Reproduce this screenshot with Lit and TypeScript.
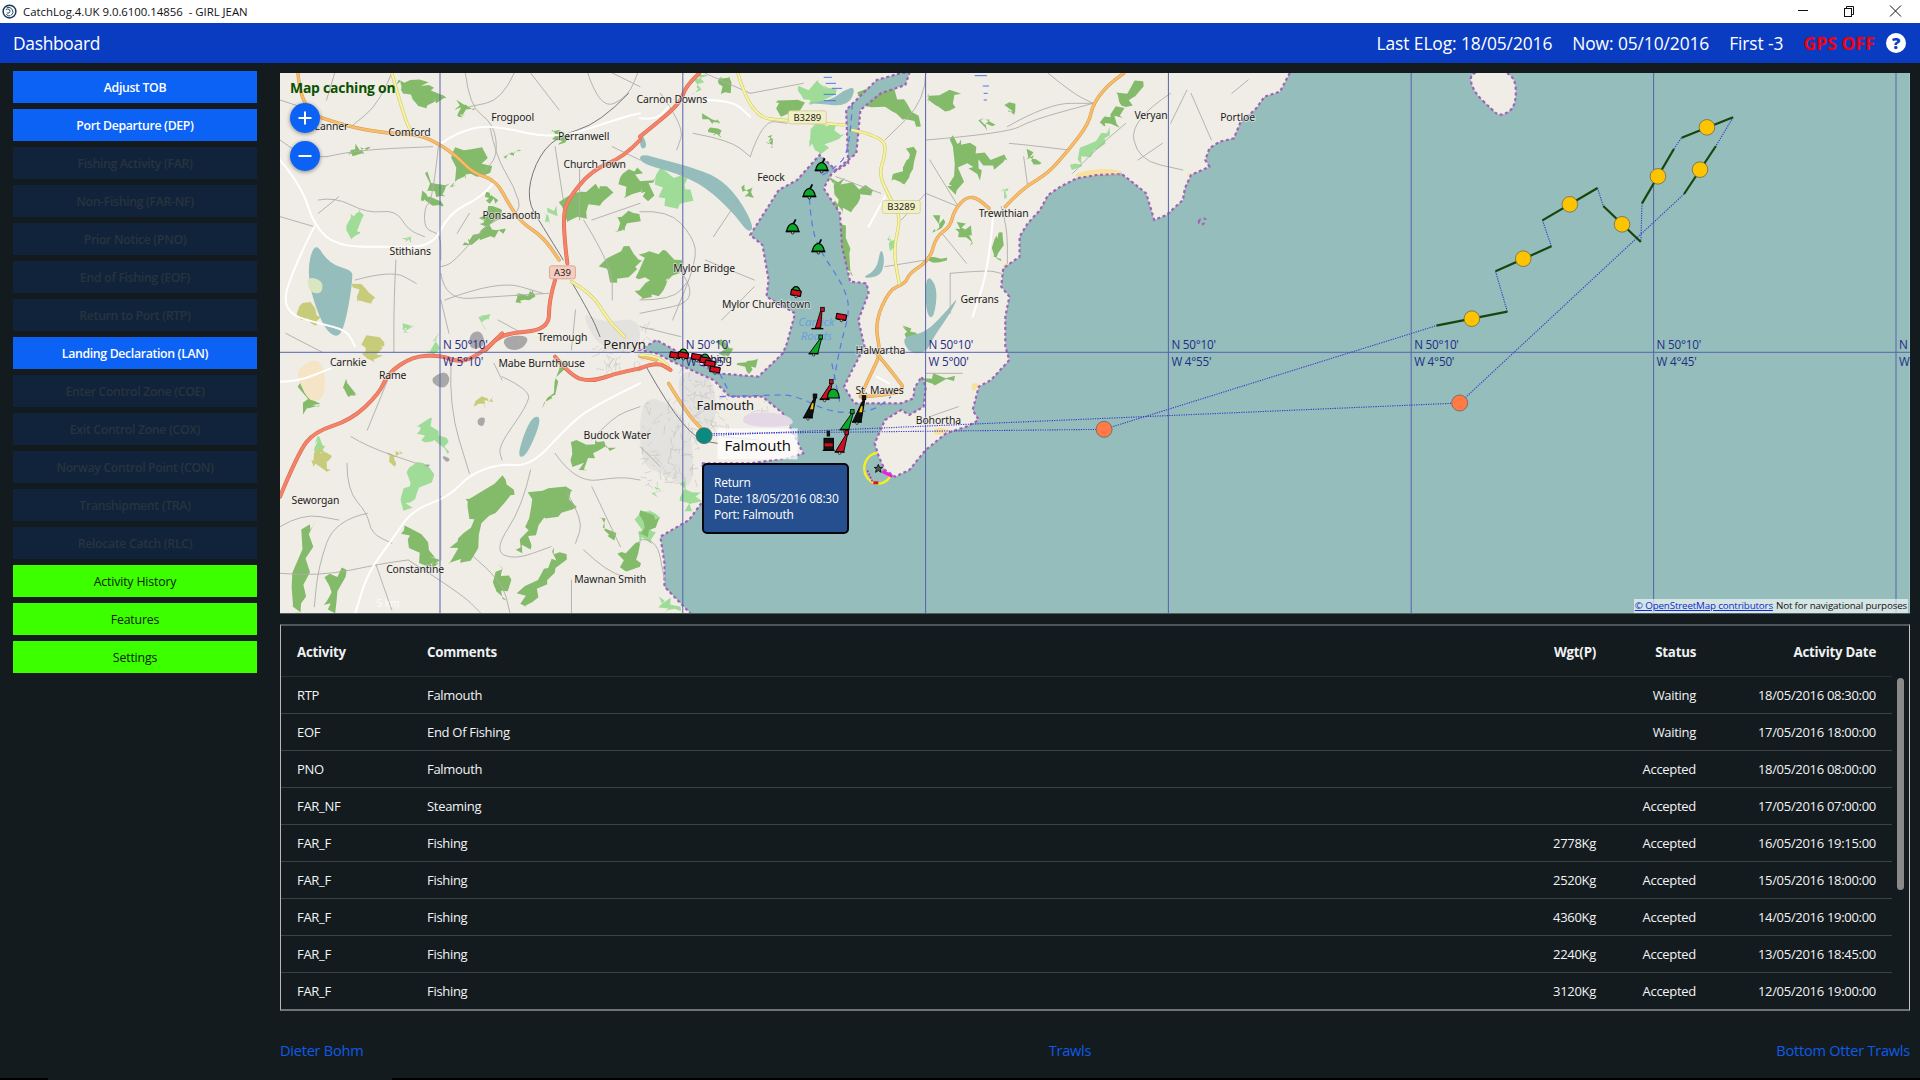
import { LitElement, html, css, svg } from "lit";
import { customElement } from "lit/decorators.js";

type Zone = "A" | "B" | "C" | "D" | "E";
const ORIGIN: Record<Zone, [number, number]> = { A: [0, 0], B: [0, 340], C: [640, 60], D: [640, 280], E: [1280, 0] };
const SX = 1 / 2.45;
const SY = 1 / 3;
const sx = (z: Zone, x: number) => ORIGIN[z][0] + x * SX;
const sy = (z: Zone, y: number) => ORIGIN[z][1] + y * SY;
const fx = (x: number) => 660 + x / 3;
const fy = (y: number) => 330 + y / 3;
const gx = (x: number) => 770 + x / 3;
const gy = (y: number) => 140 + y / 3;

function hash(s: string): number {
  let h = 2166136261;
  for (let i = 0; i < s.length; i++) h = Math.imul(h ^ s.charCodeAt(i), 16777619);
  return h >>> 0;
}
function rng(seed: number) {
  let a = seed;
  return () => {
    a = (a + 0x6d2b79f5) | 0;
    let t = Math.imul(a ^ (a >>> 15), 1 | a);
    t = (t + Math.imul(t ^ (t >>> 7), 61 | t)) ^ t;
    return ((t ^ (t >>> 14)) >>> 0) / 4294967296;
  };
}

function sm(pts: string, closed = false): string {
  const p = pts.trim().split(/\s+/).map((s) => s.split(",").map(Number));
  if (p.length < 3) return "M" + p.map((q) => q.join(" ")).join("L");
  const mid = (a: number[], b: number[]) => `${(a[0] + b[0]) / 2} ${(a[1] + b[1]) / 2}`;
  if (closed) {
    let d = `M${mid(p[p.length - 1], p[0])}`;
    p.forEach((q, i) => (d += `Q${q[0]} ${q[1]} ${mid(q, p[(i + 1) % p.length])}`));
    return d + "Z";
  }
  let d = `M${p[0].join(" ")}`;
  for (let i = 1; i < p.length - 1; i++) d += `Q${p[i][0]} ${p[i][1]} ${mid(p[i], p[i + 1])}`;
  return d + `L${p[p.length - 1].join(" ")}`;
}

function rough(pts: string, amp = 14, sub = 4): string {
  const r = rng(hash(pts));
  const p = pts.trim().split(/\s+/).map((s) => s.split(",").map(Number));
  const out: string[] = [];
  p.forEach((q, i) => {
    const n = p[(i + 1) % p.length];
    for (let k = 0; k < sub; k++) {
      const t = k / sub;
      const j = k === 0 ? 0.3 : 1;
      const x = q[0] + (n[0] - q[0]) * t + (r() - 0.5) * 2 * amp * j;
      const y = q[1] + (n[1] - q[1]) * t + (r() - 0.5) * 2 * amp * j;
      out.push(`${x.toFixed(1)},${y.toFixed(1)}`);
    }
  });
  return "M" + out.map((s) => s.replace(",", " ")).join("L") + "Z";
}

const AREAS: Partial<Record<Zone, Record<string, string[]>>> = {
  A: {
    forest: [
      "970,250 1030,235 1060,260 1090,290 1050,315 1010,300 985,270",
      "1120,300 1160,330 1140,345 1120,340",
      "1040,520 1100,550 1090,590 1040,570",
      "1110,460 1180,440 1200,520 1150,520 1120,540 1105,560",
      "1040,580 1080,600 1060,620 1035,600",
      "1190,570 1225,600 1200,610",
      "1150,720 1195,670 1240,690 1200,710 1130,740",
      "1170,650 1210,620 1230,650 1190,680",
      "1380,600 1460,550 1500,580 1440,640 1390,670",
      "1510,650 1568,640 1530,690 1510,700",
      "1470,800 1530,740 1568,780 1568,810 1510,850",
      "1270,880 1310,870 1300,900 1265,910",
      "860,450 900,440 895,460 865,465",
      "1235,470 1270,450 1260,465",
      "1355,390 1390,400 1370,430",
      "1520,530 1560,500 1568,570 1530,590",
    ],
    light: ["860,640 880,630 880,700 860,710", "1330,640 1360,620 1350,680", "1040,1050 1080,1000 1075,1057", "985,710 1010,705 1005,720", "990,980 1005,980 1000,1000", "1180,950 1200,940 1190,990"],
    water: ["770,720 805,790 860,810 865,830 850,950 830,1020 790,980 750,830"],
    marsh: ["860,850 920,890 880,910", "740,910 790,950 770,980 730,950", "900,1010 940,1040 895,1060"],
    pale: ["750,830 790,840 790,880 760,880"],
    town: ["1420,930 1480,970 1568,950 1568,1060 1470,1050"],
    grey: ["1150,1000 1180,990 1190,1040 1150,1050", "1230,1010 1300,1005 1280,1050 1240,1050"],
  },
  B: {
    forest: [
      "740,130 760,180 785,200 745,220", "845,120 870,165 855,170",
      "1140,480 1230,410 1260,460 1200,530 1150,660 1100,670 1120,600 1160,540",
      "1290,460 1400,450 1400,510 1330,530 1300,620 1265,630 1290,560",
      "990,560 1050,630 1070,670 1050,680 1000,600",
      "740,570 770,550 760,700 735,820 720,800", "810,700 850,690 820,820 800,780",
      "1220,670 1245,710 1235,780 1215,740", "1270,760 1340,680 1360,620 1385,660 1340,730 1290,800",
      "1400,310 1460,300 1510,320 1450,340 1440,390 1400,360",
      "1330,210 1370,90 1390,60 1360,160", "1470,530 1505,600 1480,570",
      "1525,640 1568,600 1568,670 1530,690",
    ],
    light: ["1020,260 1060,230 1095,290 1100,340 1060,300 1020,280", "1020,370 1060,410 1020,480 990,510 1000,440", "780,295 790,330 775,320"],
    marsh: ["1180,170 1205,180 1195,205 1165,200", "785,325 800,340 805,385 770,380", "955,340 978,335 970,370 950,365", "895,0 930,0 935,50 900,60"],
    farm: ["730,80 790,50 800,170 760,190 730,120"],
    grey: ["1050,120 1090,90 1105,120 1085,150", "1170,235 1190,230 1185,260 1170,255", "1080,345 1105,355 1095,370", "1035,375 1055,372 1050,382"],
    water: ["1300,230 1330,230 1290,350 1265,350"],
  },
  C: {
    forest: [
      "0,580 60,570 100,620 60,670 0,660", "0,690 80,640 60,690 0,720", "330,130 400,130 350,170",
      "460,350 520,370 570,400 530,430 500,460 480,400", "530,100 620,60 650,120 690,200 640,180 570,140",
      "700,110 790,100 760,150 700,120", "760,240 790,240 820,280 900,300 870,330 830,300 830,360 800,310 770,400 755,370",
      "620,350 650,300 670,260 660,340 640,370", "1140,170 1185,145 1170,190 1140,200", "1170,100 1230,60 1210,110 1180,140",
      "780,490 815,500 810,560 780,530", "870,530 885,530 885,600 870,590", "640,800 700,840 660,870",
      "480,420 500,530 525,650 505,620 480,500", "150,160 200,190 180,190", "190,60 220,50 210,100",
      "310,230 325,260 315,255", "250,380 275,410 255,410", "170,210 195,225 175,230", "905,130 920,165 905,150",
      "945,270 985,310 960,305", "830,180 870,195 850,205", "720,470 750,490 720,510",
      "700,590 750,590 710,610", "0,380 40,340 20,420",
    ],
    light: ["45,330 120,350 130,420 70,440 45,400", "390,80 440,70 480,90 450,130 400,120", "430,190 480,190 490,240 440,280 415,260", "1060,330 1100,250 1150,200 1120,270 1080,310", "130,100 160,45 140,85", "610,530 625,535 615,570", "890,385 905,385 900,415"],
    sand: ["1065,340 1120,325 1180,330 1180,342 1120,345 1068,355", "890,610 910,610 905,625 890,625", "1335,345 1360,338 1350,350"],
  },
  D: {
    town: ["90,270 180,280 190,440 140,440 100,380", "0,340 90,380 130,470 130,640 60,580 0,560"],
    light: ["100,590 150,640 130,690 100,650", "0,700 40,700 30,780 0,790", "50,950 100,980 60,1000", "40,620 60,640 40,650"],
    forest: ["690,290 770,290 720,310", "0,700 45,710 20,770 0,760", "640,140 690,190 660,190", "200,180 220,230 195,220", "235,250 290,240 270,280"],
    sand: ["810,310 835,310 815,340", "720,440 770,450 720,470"],
  },
};

const RIVERS: [Zone, string][] = [
  ["C", "0,280 60,300 120,320 190,350 240,410 280,500 265,520 230,460 160,380 90,340 0,310"],
  ["C", "590,560 600,600 590,650 540,655 580,630"],
  ["C", "640,830 700,820 760,740 780,710 760,760 720,830 700,880 660,880"],
  ["C", "400,130 470,120 500,90 530,80 510,140 430,130"],
  ["C", "700,640 730,680 720,780 700,760"],
  ["C", "0,210 0,270 20,260"],
];

const SEA = "1592,39 1568,95 1530,110 1510,145 1470,190 1455,235 1420,245 1395,265 1385,300 1395,320 1350,345 1335,385 1330,420 1290,465 1260,480 1250,440 1240,400 1210,370 1180,342 1120,345 1070,355 1030,380 1000,405 980,450 950,490 930,530 930,590 890,625 885,680 905,710 895,770 895,860 905,900 860,960 830,980 815,1050 830,1080 800,1100 750,1120 700,1170 660,1230 625,1250 600,1230 585,1190 575,1150 600,1080 640,1050 660,1065 695,1040 700,980 690,950 672,985 670,1015 640,1030 560,1030 525,1030 500,980 520,930 550,860 535,780 560,700 555,670 515,665 495,560 490,460 450,385 470,340 510,310 505,150 580,60 640,39 660,39 650,75 590,100 540,150 530,280 480,330 440,285 385,360 340,390 270,525 300,555 315,660 310,710 380,760 360,850 350,880 290,950 190,940 100,880 40,840 0,870 40,880 80,905 180,960 220,1010 300,1010 350,1060 400,1180 360,1195 270,1210 150,1210 180,1280 120,1380 50,1430 60,1510 60,1580 125,1662";
const ISLAND = "465,210 470,270 520,330 540,350 580,320 575,210";

const ROADS: Partial<Record<Zone, Record<string, string[]>>> = {
  A: {
    minor: [
      "1140,219 1150,320 1210,370 1220,470 1180,520", "1075,430 1060,600 1040,620 1040,690 1080,700 1080,780",
      "780,600 820,590 900,640 970,630 1000,690 1040,710", "686,650 770,680", "800,470 870,450 1060,440",
      "960,219 930,310 860,380", "970,780 965,900 965,1057", "1080,820 1090,900 1210,890 1345,880", "1080,900 1100,1000",
      "1200,380 1215,470 1260,560 1280,640 1200,660 1110,790 1080,800", "1360,440 1380,600", "1430,660 1500,800 1500,900",
      "1440,219 1470,330 1540,290 1568,200", "1500,219 1568,260", "686,420 740,470 800,470", "830,590 780,640",
      "1150,640 1120,700", "1090,900 1220,840 1330,880", "1420,500 1420,660", "686,300 760,330", "820,219 800,300",
      "1260,219 1230,300 1150,320", "1300,219 1370,330", "870,840 960,810 1020,850", "700,1000 790,1057", "1220,960 1280,1000",
      "1500,440 1568,480", "1450,660 1568,610", "1410,930 1400,1050",
    ],
    white: [
      "686,480 740,560 770,680 830,740 960,740 1060,740 1100,640 1180,590 1215,540",
      "1080,430 1130,390 1210,375 1360,420 1530,350 1568,340",
      "770,680 700,850 700,940 780,970 850,990 870,1040",
    ],
    rail: ["1540,280 1470,370 1360,410 1310,490 1290,600 1330,680 1380,780", "1400,845 1450,950 1470,1010"],
    orange: ["780,350 850,380 950,400 1030,405 1080,435 1120,470 1160,520 1215,540 1250,620 1280,670 1330,710 1370,780", "730,219 735,290 770,345"],
    red: ["1568,420 1530,470 1450,510 1390,600 1380,650 1385,740 1390,790", "1360,840 1345,900 1345,990 1230,1000 1190,1050"],
    yellow: ["960,219 990,350 1005,390", "1400,845 1450,880 1490,960 1530,1010"],
  },
  B: {
    minor: [
      "850,370 850,450 900,520 910,580 960,610", "860,290 900,320 1020,370", "1105,70 1100,200 1150,400",
      "1230,110 1300,150 1290,200 1220,320 1230,360", "900,520 820,540 780,680 770,800", "686,700 780,710 940,670 1000,660",
      "1300,390 1280,500 1210,630 1260,660 1350,620", "1360,340 1410,430 1520,410 1568,420", "1430,630 1490,700 1568,720",
      "1080,470 1080,660", "1000,660 1130,760 1180,822", "960,810 920,670", "1450,300 1500,230 1568,200",
      "686,560 740,520 830,540", "1160,650 1230,720 1250,822", "1400,720 1400,822", "1450,440 1520,620", "950,120 900,270",
      "1230,120 1210,70", "1390,460 1430,540 1410,610",
    ],
    white: ["686,125 730,125 810,85", "1568,130 1450,200 1390,260 1300,380 1225,370 1150,405 1100,470 1010,510 960,600 900,700 870,822"],
    red: ["686,470 730,340 770,275 860,240 930,160 950,100 1010,50 1080,45 1130,70 1190,30 1230,-20", "1360,50 1400,110 1450,125 1510,100 1568,85"],
  },
  C: {
    minor: [
      "270,100 400,70", "900,200 1000,130 1110,130", "700,240 900,220 960,180 1110,130", "700,400 780,440", "710,300 730,340 780,440",
      "1190,190 1140,240 1060,340", "905,250 950,255 1050,270", "1300,100 1200,180 1220,300 1330,330", "1350,100 1400,240", "1100,360 1180,340",
      "940,290 950,380", "0,455 70,450 130,530 140,600 80,780", "160,600 280,660", "180,530 240,420", "270,290 300,180 360,190",
      "90,620 160,720 0,760", "760,640 850,630 885,640", "600,620 700,600", "480,350 590,400", "160,40 270,100", "1000,40 1060,100 1110,130",
      "1300,190 1340,90", "700,40 700,120 600,240", "885,440 900,500 900,610", "50,100 110,200 90,270", "130,220 220,240 270,290",
      "640,480 700,400", "1450,100 1490,60", "1220,300 1280,250", "740,520 800,610", "760,640 760,760",
    ],
    white: ["160,120 225,120 270,170", "600,410 560,500", "865,470 855,620 815,770", "0,175 40,180 70,140"],
    orange: ["1185,40 1150,70 1110,130 1100,190 1050,270 1000,340 950,375 910,420 895,440", "855,445 830,415 800,410 770,450 760,500 725,530 710,600 660,640 650,670 610,690 575,790 590,880 570,930 540,1010", "540,1010 660,1005 620,940 580,880"],
    red: ["145,40 110,80 100,130 0,230"],
    yellow: ["240,40 270,170 365,183 500,195", "520,210 600,230 600,290 585,340 610,410 640,470 620,570 635,670"],
  },
  D: {
    minor: ["200,470 290,480", "0,500 50,560", "0,780 40,770 60,900", "700,280 790,280", "0,140 100,170", "0,60 80,60 120,0", "200,120 280,20", "710,410 780,380"],
    rail: ["15,260 70,380 140,480 190,490"],
    orange: ["70,310 115,400 150,445", "0,228 40,240"],
    red: ["0,265 40,245 75,270"],
    yellow: ["0,225 40,225 70,260"],
    white: ["580,290 610,310"],
  },
};

const CHANNELS: [Zone, string][] = [
  ["C", "415,415 420,500 440,570 500,680 515,750 490,860 475,960"],
  ["C", "520,130 515,280 470,330 440,350"],
  ["D", "195,350 320,345 380,345 470,400 570,395 615,350"],
  ["D", "470,250 490,370"],
  ["D", "195,280 220,340"],
];
const WATER_TICKS = ["450,52 470,52", "455,70 480,70", "470,85 495,85", "450,103 480,103", "450,122 480,122", "820,47 850,47", "840,78 855,78", "842,100 852,100", "842,120 850,120"];

const TOWN_HATCH: [number, number, number, number, number][] = [
  [682, 360, 46, 72, 70], [640, 395, 60, 90, 90], [590, 345, 50, 25, 30], [645, 320, 8, 20, 6], [760, 400, 30, 12, 12],
];

const GRID_X = [440, 682.8, 925.6, 1168.4, 1411.2, 1653.6, 1896];
const GRID_W = ["W 5°10'", "W 5°05'", "W 5°00'", "W 4°55'", "W 4°50'", "W 4°45'", "W"];
const GRID_Y = 352.3;

const LABELS: [Zone, number, number, string][] = [
  ["A", 1256, 353, "Frogpool"], ["A", 1430, 410, "Perranwell"], ["A", 1003, 396, "Comford"], ["A", 812, 380, "Lanner"],
  ["A", 1457, 494, "Church Town"], ["A", 1253, 645, "Ponsanooth"], ["A", 1005, 753, "Stithians"], ["A", 1378, 1012, "Tremough"],
  ["B", 853, 68, "Carnkie"], ["B", 962, 105, "Rame"], ["B", 1327, 71, "Mabe Burnthouse"], ["B", 1512, 287, "Budock Water"],
  ["B", 773, 482, "Seworgan"], ["B", 1017, 687, "Constantine"], ["B", 1495, 718, "Mawnan Smith"],
  ["C", 78, 118, "Carnon Downs"], ["C", 321, 352, "Feock"], ["C", 157, 626, "Mylor Bridge"], ["C", 309, 732, "Mylor Churchtown"],
  ["C", 1252, 166, "Veryan"], ["C", 1464, 172, "Portloe"], ["C", 891, 459, "Trewithian"], ["C", 832, 718, "Gerrans"], ["C", 589, 870, "Halwartha"],
  ["D", 175, 237, "Flushing"], ["D", 587, 330, "St. Mawes"], ["D", 731, 421, "Bohortha"],
];

const TRACK_GREEN = [
  "383,977 557,935", "528,814 665,739", "643,661 778,564", "792,618 884,726", "887,610 965,447", "984,413 1110,352", "1068,438 990,582",
];
const TRACK_DOT = [
  "557,935 528,814", "665,739 643,661", "778,564 792,618", "887,610 884,726", "965,447 984,413", "1110,352 1068,438", "990,582 440,1209",
];
const YELLOWS = [[470, 956], [596, 776], [710, 613], [838, 673], [926, 529], [1046, 382], [1029, 509]];

const BELLS_G: [number, number][] = [[155, 82], [118, 160], [68, 265], [145, 325]];
const SPARS_F: [number, number, number, number, string][] = [
  [462, 70, 482, 18, "g"], [495, 207, 514, 152, "r"], [445, 262, 465, 195, "y"], [555, 298, 577, 242, "g"], [592, 275, 612, 200, "y"], [540, 365, 560, 305, "r"],
];
const CLUSTER_F: [number, number][] = [[45, 75], [70, 75], [110, 80], [135, 90], [150, 100], [165, 118]];

const BUTTONS: [string, string][] = [
  ["Adjust TOB", "on"], ["Port Departure (DEP)", "on"], ["Fishing Activity (FAR)", "off"], ["Non-Fishing (FAR-NF)", "off"],
  ["Prior Notice (PNO)", "off"], ["End of Fishing (EOF)", "off"], ["Return to Port (RTP)", "off"], ["Landing Declaration (LAN)", "on"],
  ["Enter Control Zone (COE)", "off"], ["Exit Control Zone (COX)", "off"], ["Norway Control Point (CON)", "off"], ["Transhipment (TRA)", "off"],
  ["Relocate Catch (RLC)", "off"], ["Activity History", "go"], ["Features", "go"], ["Settings", "go"],
];

const ROWS = [
  ["RTP", "Falmouth", "", "Waiting", "18/05/2016 08:30:00"],
  ["EOF", "End Of Fishing", "", "Waiting", "17/05/2016 18:00:00"],
  ["PNO", "Falmouth", "", "Accepted", "18/05/2016 08:00:00"],
  ["FAR_NF", "Steaming", "", "Accepted", "17/05/2016 07:00:00"],
  ["FAR_F", "Fishing", "2778Kg", "Accepted", "16/05/2016 19:15:00"],
  ["FAR_F", "Fishing", "2520Kg", "Accepted", "15/05/2016 18:00:00"],
  ["FAR_F", "Fishing", "4360Kg", "Accepted", "14/05/2016 19:00:00"],
  ["FAR_F", "Fishing", "2240Kg", "Accepted", "13/05/2016 18:45:00"],
  ["FAR_F", "Fishing", "3120Kg", "Accepted", "12/05/2016 19:00:00"],
];

const zoneG = (z: Zone, content: unknown) =>
  svg`<g transform="translate(${ORIGIN[z][0]} ${ORIGIN[z][1]}) scale(${SX} ${SY})">${content}</g>`;

@customElement("app-root")
export class AppRoot extends LitElement {
  static styles = css`
    :host { display: flex; flex-direction: column; width: 1920px; height: 1080px; overflow: hidden; background: #141b1f; font-family: "Open Sans", "Noto Sans", sans-serif; color: #fff; }
    .titlebar { height: 23px; flex: none; background: #fff; color: #111; display: flex; align-items: center; font-size: 11.4px; letter-spacing: -0.02px; padding-left: 2px; }
    .titlebar .ico { width: 15px; height: 15px; margin-right: 6px; flex: none; }
    .titlebar .name { white-space: pre; }
    .winbtns { margin-left: auto; margin-right: 2px; display: flex; }
    .winbtns svg { width: 46px; height: 23px; display: block; }
    .header { height: 40px; flex: none; background: #0a3cc2; display: flex; align-items: center; padding: 0 14px 0 13px; font-size: 17.4px; line-height: 26px; letter-spacing: -0.1px; }
    .header .title { letter-spacing: -0.3px; }
    .header .stats { margin-left: auto; display: flex; flex: none; align-items: center; gap: 20px; white-space: nowrap; }
    .header .stats span { flex: none; }
    .gps { color: #f5000a; font-weight: 700; letter-spacing: 0.15px; }
    .help { width: 20px; height: 20px; display: block; flex: none; margin-left: -9px; }
    .help text { font-family: "Open Sans", sans-serif; font-weight: 800; font-size: 16.5px; fill: #0a3cc2; text-anchor: middle; }
    .body { flex: 1; display: flex; min-height: 0; }
    .side { width: 244px; flex: none; margin-left: 13px; padding-top: 8px; display: flex; flex-direction: column; gap: 6px; }
    .btn { height: 32px; display: flex; align-items: center; justify-content: center; font-size: 12.3px; font-weight: 600; letter-spacing: -0.34px; white-space: nowrap; }
    .btn.on { background: #0c62f5; color: #fff; }
    .btn.off { background: #11233a; color: #27343f; }
    .btn.go { background: #3cff00; color: #0b1a05; font-weight: 400; letter-spacing: -0.15px; }
    .main { flex: 1; margin-left: 23px; margin-right: 10px; padding-top: 10px; display: flex; flex-direction: column; min-width: 0; }
    .map { position: relative; height: 541px; flex: none; overflow: hidden; background: #f0ede7; border-bottom: 1px solid #555f60; box-sizing: border-box; }
    .map svg.canvas { display: block; width: 1630px; height: 541px; }
    .p { vector-effect: non-scaling-stroke; }
    .forest { fill: #84bb6a; }
    .light { fill: #9fdc98; }
    .water { fill: #94bdbc; }
    .marsh { fill: #c7cb7a; }
    .pale { fill: #d9e6c0; }
    .lilac { fill: #e4d8e6; }
    .farm { fill: #f6e4c6; }
    .grey { fill: #a8a8a8; }
    .town { fill: #e4e2df; }
    .sand { fill: #f8e2a0; }
    .hatch { stroke: #c5c3bf; stroke-width: 0.6; }
    .coast { fill: none; stroke: #a262b6; stroke-width: 2.2; stroke-dasharray: 3 2.6; }
    .r { fill: none; stroke-linejoin: round; stroke-linecap: round; }
    .minor { stroke: #aeada8; stroke-width: 0.9; }
    .white { stroke: #fff; stroke-width: 2; }
    .rail { stroke: #77777a; stroke-width: 1; }
    .orange-c { stroke: #d69a50; stroke-width: 3.4; }
    .orange { stroke: #f8bd68; stroke-width: 2.4; }
    .red-c { stroke: #de6c50; stroke-width: 4; }
    .red { stroke: #f3836a; stroke-width: 2.8; }
    .yellow-c { stroke: #c9c66e; stroke-width: 3.2; }
    .yellow { stroke: #f6f39c; stroke-width: 2.2; }
    .channel { fill: none; stroke: #5a78e8; stroke-width: 1.2; stroke-dasharray: 6 5; }
    .tick { fill: none; stroke: #4a78e8; stroke-width: 1; }
    .grid { stroke: #5663ad; stroke-width: 1; }
    .gridlab { font-family: "Open Sans", sans-serif; font-size: 11.7px; fill: #1f2c86; letter-spacing: -0.2px; }
    .place { font-family: "Noto Sans", sans-serif; font-size: 10.4px; fill: #1c1c1c; text-anchor: middle; paint-order: stroke; stroke: rgba(240,237,231,0.75); stroke-width: 1.5px; letter-spacing: -0.1px; }
    .town-big { font-size: 13px; }
    .bay { font-family: "Noto Sans", sans-serif; font-size: 11.5px; font-style: italic; fill: #6d9fdb; text-anchor: middle; }
    .shield-t { font-family: "Noto Sans", sans-serif; font-size: 9.5px; fill: #222; text-anchor: middle; }
    .dot { fill: none; stroke: #3636c8; stroke-width: 1.1; stroke-dasharray: 1.2 1.2; }
    .tg { stroke: #17450c; stroke-width: 2.2; fill: none; }
    .fal { font-family: "Open Sans", sans-serif; font-size: 15px; fill: #0c0c0c; }
    .caching { position: absolute; left: 10px; top: 5px; font-size: 13.9px; font-weight: 700; color: #0a5200; letter-spacing: -0.2px; }
    .zoom { position: absolute; left: 10px; width: 30px; height: 30px; border-radius: 50%; background: #0c62f5; box-shadow: 0 1px 4px rgba(0,0,0,0.45); }
    .zoom svg { display: block; width: 30px; height: 30px; }
    .zoom.plus { top: 30px; }
    .zoom.minus { top: 68px; }
    .tip { position: absolute; left: 422px; top: 390px; width: 147px; height: 71px; box-sizing: border-box; background: #264f8f; border: 2px solid #05070c; border-radius: 5px; padding: 10px 10px; font-size: 12px; line-height: 16px; letter-spacing: -0.25px; color: #fff; white-space: nowrap; }
    .attr { position: absolute; right: 2px; bottom: 0; height: 14px; background: rgba(255,255,255,0.6); font-size: 9.8px; line-height: 14px; padding: 0 1px; color: #111; letter-spacing: -0.16px; white-space: nowrap; }
    .attr span { color: #0b2bcc; text-decoration: underline; margin-right: 3px; }
    .table { height: 387px; flex: none; margin-top: 10px; box-sizing: border-box; border-top: 2px solid #4e565c; border-bottom: 2px solid #6d7377; border-left: 1px solid #b4b8ba; border-right: 1px solid #c4c8ca; display: flex; font-size: 13px; letter-spacing: -0.3px; }
    .cols { flex: 1; min-width: 0; }
    .row { display: grid; grid-template-columns: 130px 1fr 100px 100px 180px; padding: 0 16px; align-items: center; height: 37px; box-sizing: border-box; border-top: 1px solid #3c4145; color: #f2f4f5; }
    .row.head { height: 50px; padding-top: 2px; border-top: none; font-weight: 700; font-size: 13.3px; letter-spacing: -0.25px; color: #eef1f2; }
    .row.head + .row { border-top-color: #2a3034; }
    .r-al { text-align: right; }
    .track { width: 17px; flex: none; }
    .thumb { width: 7px; height: 212px; margin: 52px 0 0 5px; border-radius: 4px; background: #8a8a8a; }
    .foot { display: flex; justify-content: space-between; padding-top: 28px; font-size: 14.6px; line-height: 22px; color: #0d5be8; letter-spacing: -0.25px; }
    .strip { height: 2px; flex: none; background: #000; display: flex; }
    .strip i { display: block; width: 344px; margin-left: 48px; background: #141b1f; }
  `;

  private areas() {
    return (Object.keys(AREAS) as Zone[]).map((z) =>
      zoneG(z, Object.entries(AREAS[z]!).map(([cls, list]) =>
        list.map((pts) => {
          const jag = cls === "forest" || cls === "light" || cls === "marsh";
          return svg`<path class=${cls} d=${jag ? rough(pts) : sm(pts, true)}></path>`;
        }))));
  }

  private hatch() {
    const r = rng(42);
    const out: unknown[] = [];
    TOWN_HATCH.forEach(([x, y, w, h, n]) => {
      for (let i = 0; i < n; i++) {
        const a = x + r() * w, b = y + r() * h, t = r() * Math.PI, l = 3 + r() * 7;
        out.push(svg`<line class="hatch" x1=${a} y1=${b} x2=${a + Math.cos(t) * l} y2=${b + Math.sin(t) * l}></line>`);
      }
    });
    return out;
  }

  private sea() {
    const d = "M" + SEA.split(" ").map((q) => q.replace(",", " ")).join("L");
    return svg`${zoneG("C", svg`
      <path class="water" d="${d}L3111 1662L3111 39Z"></path>
      <path class="coast p" d=${d}></path>`)}
      ${RIVERS.map(([z, p]) => zoneG(z, svg`<path class="water" d=${sm(p, true)}></path>`))}`;
  }

  private roads() {
    const order = ["minor", "rail", "white", "orange", "yellow", "red"];
    return order.map((cls) =>
      (Object.keys(ROADS) as Zone[]).map((z) => {
        const list = ROADS[z]![cls];
        if (!list) return null;
        const cased = cls === "orange" || cls === "yellow" || cls === "red";
        return zoneG(z, list.map((pts) => svg`
          ${cased ? svg`<path class="r p ${cls}-c" d=${sm(pts)}></path>` : null}
          <path class="r p ${cls}" d=${sm(pts)}></path>`));
      }));
  }

  private shield(z: Zone, x: number, y: number, t: string, fill: string, stroke: string, w: number) {
    const X = sx(z, x), Y = sy(z, y);
    return svg`<rect x=${X - w / 2} y=${Y - 6.5} width=${w} height="13" rx="2" fill=${fill} stroke=${stroke} stroke-width="0.8"></rect>
      <text class="shield-t" x=${X} y=${Y + 3.4}>${t}</text>`;
  }

  private buoys() {
    const bell = (x: number, y: number) => svg`<g transform="translate(${gx(x)} ${gy(y)})">
      <path d="M1 -5 L3 -9" stroke="#000" stroke-width="1.8"></path>
      <path d="M-6 3 Q-5 -4 0 -5 Q5 -4 6 3Z" fill="#0ca828" stroke="#000" stroke-width="1.2"></path>
      <path d="M-7 3.2 L7 3.2" stroke="#000" stroke-width="1.6"></path>
      <circle cx="0" cy="4.4" r="1.3" fill="#9aa" stroke="#000" stroke-width="0.7"></circle></g>`;
    const can = (x: number, y: number, green = false) => svg`<g transform="translate(${x} ${y})">
      ${green ? svg`<path d="M-4.5 -1 Q-3 -6 0 -6 Q3 -6 4.5 -1Z" fill="#0ca828" stroke="#000" stroke-width="1.1"></path>` : null}
      <rect x="-5" y="-2.5" width="10" height="5.5" rx="0.6" fill="#d40c1c" stroke="#000" stroke-width="1.1" transform="rotate(10)"></rect>
      <circle cx="0" cy="3.8" r="1.2" fill="#bbb" stroke="#000" stroke-width="0.7"></circle></g>`;
    const spar = (bx: number, by: number, tx: number, ty: number, k: string) => {
      const B = [fx(bx), fy(by)], T = [fx(tx), fy(ty)];
      const c = k === "g" ? "#0ca828" : k === "r" ? "#cc1020" : "#111";
      const mid = [(B[0] + T[0]) / 2, (B[1] + T[1]) / 2];
      return svg`
        <path d="M${B[0] - 4.6} ${B[1]} L${T[0] - 0.8} ${T[1] + 3} L${T[0] + 0.8} ${T[1] + 3} L${B[0] + 3.8} ${B[1]}Z" fill=${c} stroke="#000" stroke-width="0.9"></path>
        ${k === "y" ? svg`<path d="M${mid[0] - 1.6} ${mid[1] + 3} L${mid[0] + 0.4} ${mid[1] - 3} L${mid[0] + 2} ${mid[1] - 3} L${mid[0] + 1.4} ${mid[1] + 3}Z" fill="#f0c814"></path>` : null}
        <rect x=${T[0] - 1.8} y=${T[1] - 1} width="3.6" height="4" fill=${k === "y" ? "#111" : c} stroke="#000" stroke-width="0.8"></rect>
        <path d="M${B[0] - 5.4} ${B[1] + 0.4} L${B[0] + 4.6} ${B[1] + 0.4}" stroke="#000" stroke-width="1.4"></path>
        <circle cx=${B[0] - 0.4} cy=${B[1] + 1.6} r="1.2" fill="#bbb" stroke="#000" stroke-width="0.6"></circle>`;
    };
    return svg`
      ${BELLS_G.map(([x, y]) => bell(x, y))}
      ${can(gx(78), gy(458), true)}
      ${can(gx(214), gy(530))}
      ${SPARS_F.map(([a, b, c, d, k]) => spar(a, b, c, d, k))}
      <path d="M${gx(136)} ${gy(564)} L${gx(152)} ${gy(512)} L${gx(156)} ${gy(512)} L${gx(152)} ${gy(564)}Z" fill="#cc1020" stroke="#000" stroke-width="0.9"></path>
      <rect x=${gx(152)} y=${gy(502)} width="3.6" height="4" fill="#cc1020" stroke="#000" stroke-width="0.8"></rect>
      <path d="M${gx(124)} ${gy(566)} L${gx(160)} ${gy(566)}" stroke="#000" stroke-width="1.4"></path>
      <g transform="translate(${fx(520)} ${fy(192)})"><path d="M-6 4 Q-5 -5 0 -5 Q5 -5 6 4Z" fill="#0ca828" stroke="#000" stroke-width="1.1"></path></g>
      <rect x=${fx(492)} y=${fy(325)} width="9.4" height="11.6" fill="#141414" stroke="#000"></rect>
      <rect x=${fx(494)} y=${fy(340)} width="8" height="3" fill="#d40c1c"></rect>
      <rect x=${fx(500)} y=${fy(302)} width="3.4" height="5.8" fill="#141414"></rect>
      <path d="M${fx(488)} ${fy(361)} L${fx(524)} ${fy(361)}" stroke="#000" stroke-width="1.2"></path>
      ${CLUSTER_F.map(([x, y], i) => can(fx(x), fy(y), i === 1 || i === 3))}`;
  }

  private tracks() {
    const o1 = [sx("D", 1137), sy("D", 448)];
    const o2 = [1459.7, 403];
    const teal = [sx("D", 157), sy("D", 467)];
    const ye = (p: string) => p.split(" ").map((q) => {
      const [a, b] = q.split(",").map(Number);
      return `${sx("E", a)},${sy("E", b)}`;
    }).join(" ");
    return svg`
      <polyline class="dot" points="${teal[0]},${teal[1] - 2} ${o1[0]},${o1[1]}"></polyline>
      <polyline class="dot" points="${teal[0]},${teal[1]} ${o2[0]},${o2[1]}"></polyline>
      <polyline class="dot" points="${o1[0]},${o1[1]} ${ye("383,977")}"></polyline>
      ${TRACK_DOT.map((p) => svg`<polyline class="dot" points=${ye(p)}></polyline>`)}
      ${TRACK_GREEN.map((p) => svg`<polyline class="tg" points=${ye(p)}></polyline>`)}
      ${YELLOWS.map(([x, y]) => svg`<circle cx=${sx("E", x)} cy=${sy("E", y)} r="7.8" fill="#ffc400" stroke="#6a6a50" stroke-width="0.8"></circle>`)}
      <circle cx=${o1[0]} cy=${o1[1]} r="8" fill="#ff7a45" stroke="#666" stroke-width="0.8"></circle>
      <circle cx=${o2[0]} cy=${o2[1]} r="8" fill="#ff7a45" stroke="#666" stroke-width="0.8"></circle>
      <circle cx=${teal[0]} cy=${teal[1]} r="8" fill="#0b8a80" stroke="#666" stroke-width="0.8"></circle>`;
  }

  private mapSvg() {
    const cx = fx(655), cy = fy(415);
    return svg`<svg class="canvas" viewBox="280 73 1630 541" xmlns="http://www.w3.org/2000/svg">
      <rect x="280" y="73" width="1630" height="541" fill="#f0ede7"></rect>
      ${this.areas()}
      ${this.hatch()}
      ${this.sea()}
      ${zoneG("E", svg`<path fill="#f0ede7" d=${sm(ISLAND, true)}></path><path class="coast p" d=${sm(ISLAND, true)}></path>`)}
      ${zoneG("C", svg`<path class="coast p" d=${sm("1370,478 1388,474 1380,495 1368,490", true)}></path>`)}
      ${zoneG("D", svg`<path class="lilac" d=${sm("255,395 360,400 385,440 250,440", true)}></path>`)}
      ${this.roads()}
      ${CHANNELS.map(([z, p]) => zoneG(z, svg`<path class="channel p" d=${sm(p)}></path>`))}
      ${zoneG("C", WATER_TICKS.map((p) => svg`<path class="tick p" d=${sm(p)}></path>`))}
      ${this.shield("A", 1378, 817, "A39", "#f5cdbf", "#d49a88", 26)}
      ${this.shield("C", 410, 172, "B3289", "#f1efc4", "#cfcc98", 38)}
      ${this.shield("C", 640, 441, "B3289", "#f1efc4", "#cfcc98", 38)}
      ${GRID_X.map((x) => svg`<line class="grid" x1=${x} x2=${x} y1="73" y2="614"></line>`)}
      <line class="grid" x1="280" x2="1910" y1=${GRID_Y} y2=${GRID_Y}></line>
      ${LABELS.map(([z, x, y, t]) => svg`<text class="place" x=${sx(z, x)} y=${sy(z, y) + 3.6}>${t}</text>`)}
      <text class="place town-big" x=${sx("A", 1530)} y=${sy("A", 1033) + 4.6}>Penryn</text>
      <text class="place town-big" x=${sx("D", 209)} y=${sy("D", 375) + 4.6}>Falmouth</text>
      <text class="bay" x=${sx("D", 432)} y=${sy("D", 125) + 4}>Carrick</text>
      <text class="bay" x=${sx("D", 432)} y=${sy("D", 167) + 4}>Roads</text>
      ${GRID_X.map((x, i) => svg`
        <text class="gridlab" x=${x + 3} y="349">${i === 6 ? "N" : "N 50°10'"}</text>
        <text class="gridlab" x=${x + 3} y="366">${GRID_W[i]}</text>`)}
      <rect x=${sx("D", 190)} y=${sy("D", 445)} width="80" height="31" fill="#fff" fill-opacity="0.72"></rect>
      ${this.tracks()}
      <text class="fal" x=${sx("D", 207)} y=${sy("D", 497) + 5.5}>Falmouth</text>
      ${this.buoys()}
      <g fill="none" stroke-width="2.4">
        <path d="M${cx - 1} ${cy - 15.5} A14.5 15.5 0 0 0 ${cx - 3} ${cy + 15}" stroke="#f5f01e"></path>
        <path d="M${cx - 3} ${cy + 15} A14.5 15.5 0 0 0 ${cx + 12} ${cy + 8}" stroke="#f5f01e"></path>
        <path d="M${cx + 4} ${cy + 3} L${cx + 14} ${cy + 8}" stroke="#f01ee0" stroke-width="3"></path>
        <path d="M${cx - 11} ${cy + 2} L${cx - 6} ${cy + 13}" stroke="#c81ec8" stroke-width="1.6" stroke-dasharray="2 1.5"></path>
      </g>
      <rect x=${cx - 5} y=${cy + 13} width="5" height="3" fill="#e0101e"></rect>
      <path d="M${cx} ${cy - 4} L${cx + 1.2} ${cy - 1} L${cx + 4} ${cy - 1} L${cx + 2} ${cy + 1} L${cx + 2.8} ${cy + 4} L${cx} ${cy + 2.2} L${cx - 2.8} ${cy + 4} L${cx - 2} ${cy + 1} L${cx - 4} ${cy - 1} L${cx - 1.2} ${cy - 1}Z" fill="#555" stroke="#000" stroke-width="0.8"></path>
      <text x="388" y="607" font-family="Noto Sans, sans-serif" font-size="10" fill="#fff" fill-opacity="0.8" text-anchor="middle">5 km</text>
    </svg>`;
  }

  render() {
    return html`
      <div class="titlebar">
        <svg class="ico" viewBox="0 0 16 16">
          <circle cx="8" cy="8" r="6.8" fill="#fff" stroke="#163a5c" stroke-width="1.6"></circle>
          <path d="M5 3.5 Q9 3 11 6 Q13 9 10 12 M4 6 Q6 4.5 8 6 Q9.5 8 7.5 9.5 Q6 10.5 5 9 M4.5 11 Q6.5 13.5 9 12.5" fill="none" stroke="#163a5c" stroke-width="1"></path>
        </svg>
        <span class="name">CatchLog.4.UK 9.0.6100.14856  - GIRL JEAN</span>
        <div class="winbtns">
          <svg viewBox="0 0 46 23"><line x1="18" x2="28" y1="10.5" y2="10.5" stroke="#111" stroke-width="1"></line></svg>
          <svg viewBox="0 0 46 23"><rect x="18.5" y="8.5" width="7" height="8" fill="none" stroke="#111"></rect><path d="M20.5 8.5V6.5H27.5V14.5H25.5" fill="none" stroke="#111"></path></svg>
          <svg viewBox="0 0 46 23"><path d="M18 5.5L29 16.5M29 5.5L18 16.5" stroke="#111" stroke-width="1"></path></svg>
        </div>
      </div>
      <div class="header">
        <span class="title">Dashboard</span>
        <div class="stats">
          <span>Last ELog: 18/05/2016</span>
          <span>Now: 05/10/2016</span>
          <span>First -3</span>
          <span class="gps">GPS OFF</span>
          <svg class="help" viewBox="0 0 20 20"><circle cx="10" cy="10" r="10" fill="#fff"></circle><text x="10" y="16">?</text></svg>
        </div>
      </div>
      <div class="body">
        <nav class="side">
          ${BUTTONS.map(([t, k]) => html`<div class="btn ${k}">${t}</div>`)}
        </nav>
        <div class="main">
          <div class="map">
            ${this.mapSvg()}
            <div class="caching">Map caching on</div>
            <div class="zoom plus"><svg viewBox="0 0 30 30"><path d="M15 8.5V21.5M8.5 15H21.5" stroke="#fff" stroke-width="2"></path></svg></div>
            <div class="zoom minus"><svg viewBox="0 0 30 30"><path d="M8.5 15H21.5" stroke="#fff" stroke-width="2"></path></svg></div>
            <div class="tip">Return<br />Date: 18/05/2016 08:30<br />Port: Falmouth</div>
            <div class="attr"><span>© OpenStreetMap contributors</span>Not for navigational purposes</div>
          </div>
          <div class="table">
            <div class="cols">
              <div class="row head"><div>Activity</div><div>Comments</div><div class="r-al">Wgt(P)</div><div class="r-al">Status</div><div class="r-al">Activity Date</div></div>
              ${ROWS.map((r) => html`<div class="row"><div>${r[0]}</div><div>${r[1]}</div><div class="r-al">${r[2]}</div><div class="r-al">${r[3]}</div><div class="r-al">${r[4]}</div></div>`)}
            </div>
            <div class="track"><div class="thumb"></div></div>
          </div>
          <div class="foot"><span>Dieter Bohm</span><span>Trawls</span><span>Bottom Otter Trawls</span></div>
        </div>
      </div>
      <div class="strip"><i></i></div>
    `;
  }
}
